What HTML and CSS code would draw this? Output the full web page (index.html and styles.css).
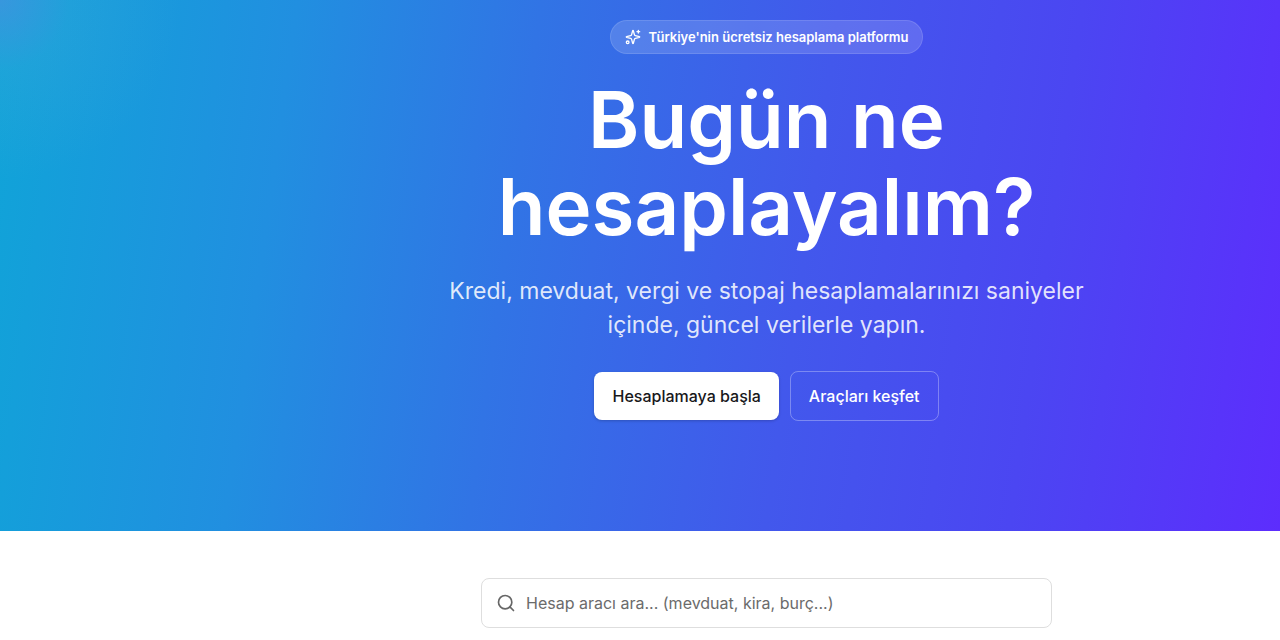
FILE: index.html
```
<!DOCTYPE html>
<html lang="tr">
<head>
    <meta charset="UTF-8">
    <meta name="viewport" content="width=device-width, initial-scale=1.0">
    <title>Bugün ne hesaplayalım?</title>
    <link rel="stylesheet" href="styles.css">
</head>
<body>
    <section class="hero">
        <div class="hero-content">
            <div class="badge">
                <svg class="badge-icon" viewBox="0 0 24 24" fill="none" stroke="currentColor" stroke-width="2" stroke-linecap="round" stroke-linejoin="round" aria-hidden="true">
                    <path d="M9.94 15.5A2 2 0 0 0 8.5 14.06l-6.14-1.58a.5.5 0 0 1 0-.96L8.5 9.94A2 2 0 0 0 9.94 8.5l1.58-6.14a.5.5 0 0 1 .96 0l1.58 6.14a2 2 0 0 0 1.44 1.44l6.14 1.58a.5.5 0 0 1 0 .96l-6.14 1.58a2 2 0 0 0-1.44 1.44l-1.58 6.14a.5.5 0 0 1-.96 0z"/>
                    <path d="M20 2v4M22 4h-4"/>
                    <circle cx="4" cy="20" r="2"/>
                </svg>
                <span>Türkiye'nin ücretsiz hesaplama platformu</span>
            </div>

            <h1 class="hero-title">Bugün ne hesaplayalım?</h1>

            <p class="hero-text">Kredi, mevduat, vergi ve stopaj hesaplamalarınızı saniyeler içinde, güncel verilerle yapın.</p>

            <div class="button-container">
                <a class="button start-button" href="#search">Hesaplamaya başla</a>
                <a class="button explore-button" href="#tools">Araçları keşfet</a>
            </div>
        </div>
    </section>

    <section class="search-section" id="tools">
        <form class="search-box" role="search">
            <svg class="search-icon" viewBox="0 0 24 24" fill="none" stroke="currentColor" stroke-width="2" stroke-linecap="round" stroke-linejoin="round" aria-hidden="true">
                <circle cx="11" cy="11" r="8"/>
                <path d="m21 21-4.3-4.3"/>
            </svg>
            <input class="search-input" id="search" type="search" aria-label="Hesap aracı ara" placeholder="Hesap aracı ara... (mevduat, kira, burç...)">
        </form>
    </section>
</body>
</html>
```
FILE: styles.css
```
* {
    box-sizing: border-box;
}

body {
    font-family: Inter, 'Liberation Sans', sans-serif;
    margin: 0;
    background: white;
}

.hero {
    padding: 20px 0 110px 253px;
    color: white;
    background:
        radial-gradient(circle at 0 0, rgba(120, 130, 230, 0.38) 0, rgba(120, 170, 220, 0.12) 70px, rgba(120, 170, 220, 0) 180px),
        linear-gradient(98deg, #10a4d8 0%, #218fe0 22%, #3174e5 40%, #4258ec 62%, #4b46f2 80%, #5d2dfd 100%);
}

.hero-content {
    display: flex;
    flex-direction: column;
    align-items: center;
    max-width: 672px;
    margin: 0 auto;
    text-align: center;
}

.badge {
    display: flex;
    align-items: center;
    gap: 8px;
    padding: 8px 14px;
    border: 1px solid rgba(255, 255, 255, 0.12);
    border-radius: 50px;
    background: rgba(255, 255, 255, 0.15);
    font-size: 13px;
    font-weight: 600;
    line-height: 16px;
}

.badge-icon {
    width: 16px;
    height: 16px;
}

.hero-title {
    margin: 22px 0 0;
    font-size: 78px;
    font-weight: 600;
    line-height: 87px;
}

.hero-text {
    margin: 24px 0 0;
    font-size: 23px;
    line-height: 34px;
    color: rgba(255, 255, 255, 0.85);
}

.button-container {
    display: flex;
    align-items: center;
    gap: 11px;
    margin-top: 29px;
}

.button {
    padding: 12px 18px;
    border-radius: 8px;
    font-size: 16px;
    font-weight: 500;
    line-height: 24px;
    text-decoration: none;
}

.start-button {
    background: white;
    color: #18181b;
    box-shadow: 0 1px 3px rgba(0, 0, 0, 0.2);
}

.explore-button {
    border: 1px solid rgba(255, 255, 255, 0.3);
    color: white;
}

.search-section {
    padding: 47px 0 12px 253px;
}

.search-box {
    display: flex;
    align-items: center;
    gap: 10px;
    max-width: 571px;
    height: 50px;
    margin: 0 auto;
    padding: 0 14px;
    border: 1px solid #dedede;
    border-radius: 8px;
    color: #666;
}

.search-icon {
    width: 20px;
    height: 20px;
}

.search-input {
    flex: 1;
    padding: 0;
    border: none;
    outline: none;
    background: none;
    font: inherit;
    font-size: 16px;
    color: #222;
}

.search-input::placeholder {
    color: #6b6b6b;
}
```
